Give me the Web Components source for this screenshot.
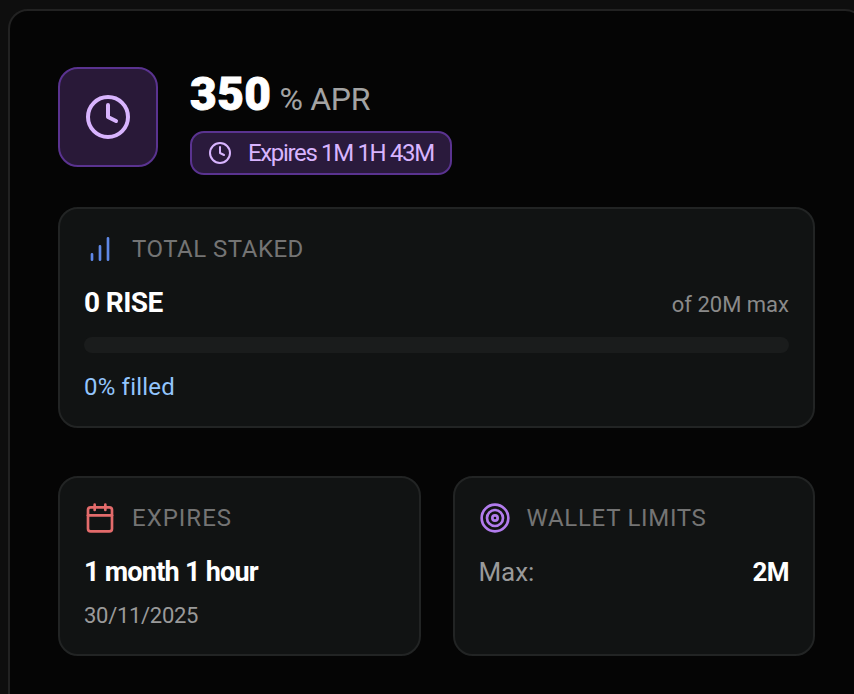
<!DOCTYPE html>
<html>
<head>
<meta charset="utf-8">
<title>Stake pool</title>
<style>
  html, body { margin: 0; height: 100%; overflow: hidden; background: #0e0e0e; }
  body { padding: 9px 0 0 8px; box-sizing: border-box; font-family: Roboto, "Liberation Sans", sans-serif; }
</style>
</head>
<body>
<x-pool>
  <x-apr-header slot="header" value="350" unit="% APR" expires="Expires 1M 1H 43M"></x-apr-header>

  <x-card slot="total" icon="bars" color="#5f88e6" label="TOTAL STAKED" spacing=".5">
    <x-between>
      <x-text size="28" weight="700" color="#fff" spacing="-.6">0 RISE</x-text>
      <x-text slot="end" size="22" color="#8a8a8a">of 20M max</x-text>
    </x-between>
    <x-progress value="0"></x-progress>
    <x-text size="24" color="#93c5fd" spacing=".2">0% filled</x-text>
  </x-card>

  <x-card slot="expires" icon="calendar" color="#e36b6b" label="EXPIRES" spacing="1">
    <x-text size="27" weight="700" color="#fff" spacing="-.75">1 month 1 hour</x-text>
    <x-text class="sub" size="22" color="#9a9a9a" spacing="-.3">30/11/2025</x-text>
  </x-card>

  <x-card slot="limits" icon="target" color="#b27ced" label="WALLET LIMITS" spacing=".7">
    <x-between>
      <x-text size="26" color="#9a9a9a" spacing="-.1">Max:</x-text>
      <x-text slot="end" size="26" weight="700" color="#fff" spacing="-.6">2M</x-text>
    </x-between>
  </x-card>
</x-pool>

<script>
const ICONS = {
  clock: '<circle cx="12" cy="12" r="10"/><path d="M12 6v6l4 2"/>',
  bars: '<path d="M12 20V10M18 20V4M6 20v-4"/>',
  calendar: '<path d="M8 2v4M16 2v4"/><rect x="3" y="4" width="18" height="18" rx="2"/><path d="M3 10h18"/>',
  target: '<circle cx="12" cy="12" r="10"/><circle cx="12" cy="12" r="6"/><circle cx="12" cy="12" r="2"/>'
}

class Icon extends HTMLElement {
  connectedCallback(){
    const size = this.getAttribute('size') || 32
    this.attachShadow({ mode: 'open' }).innerHTML = `
      <style>
        :host { display: block; width: ${size}px; height: ${size}px; flex: none; }
        svg { display: block; }
      </style>
      <svg width="${size}" height="${size}" viewBox="0 0 24 24" fill="none" stroke="${this.getAttribute('color')}"
        stroke-width="${this.getAttribute('stroke') || 2}" stroke-linecap="round" stroke-linejoin="round">${ICONS[this.getAttribute('name')]}</svg>
    `
  }
}

class Text extends HTMLElement {
  connectedCallback(){
    const a = n => this.getAttribute(n)
    this.attachShadow({ mode: 'open' }).innerHTML = `
      <style>
        :host {
          display: block;
          font-size: ${a('size')}px;
          font-weight: ${a('weight') || 400};
          color: ${a('color')};
          letter-spacing: ${a('spacing') || 0}px;
          line-height: 32px;
          white-space: nowrap;
        }
      </style>
      <slot></slot>
    `
  }
}

class Between extends HTMLElement {
  constructor(){
    super()
    this.attachShadow({ mode: 'open' }).innerHTML = `
      <style>
        :host { display: flex; justify-content: space-between; align-items: baseline; }
      </style>
      <slot></slot><slot name="end"></slot>
    `
  }
}

class Progress extends HTMLElement {
  connectedCallback(){
    this.attachShadow({ mode: 'open' }).innerHTML = `
      <style>
        :host { display: block; height: 16px; margin: 16px 0 18px; border-radius: 8px; background: #1a1c1c; overflow: hidden; }
        div { height: 100%; background: #93c5fd; }
      </style>
      <div style="width:${this.getAttribute('value')}%"></div>
    `
  }
}

class Card extends HTMLElement {
  connectedCallback(){
    this.attachShadow({ mode: 'open' }).innerHTML = `
      <style>
        :host {
          display: block;
          box-sizing: border-box;
          padding: 24px;
          background: #111313;
          border: 2px solid #222424;
          border-radius: 20px;
        }
        header { display: flex; align-items: center; gap: 16px; height: 32px; margin-bottom: 22px; }
        h3 { margin: 0; font-size: 24px; font-weight: 400; letter-spacing: ${this.getAttribute('spacing')}px; color: #747474; line-height: 32px; }
        ::slotted(.sub) { margin-top: 12px; }
      </style>
      <header>
        <x-icon name="${this.getAttribute('icon')}" color="${this.getAttribute('color')}"></x-icon>
        <h3>${this.getAttribute('label')}</h3>
      </header>
      <slot></slot>
    `
  }
}

class AprHeader extends HTMLElement {
  connectedCallback(){
    const purple = '#d8b4fe'
    this.attachShadow({ mode: 'open' }).innerHTML = `
      <style>
        :host { display: flex; align-items: flex-start; gap: 32px; }
        .tile {
          box-sizing: border-box;
          display: flex; align-items: center; justify-content: center;
          width: 100px; height: 100px;
          background: #291938;
          border: 2px solid #5a3390;
          border-radius: 20px;
        }
        .apr { display: flex; align-items: baseline; gap: 8px; height: 64px; line-height: 54px; }
        .num { font-size: 46px; font-weight: 900; color: #fff; -webkit-text-stroke: .9px #fff; letter-spacing: .5px; }
        .unit { font-size: 32px; color: #a3a3a3; letter-spacing: -.3px; }
        .chip {
          display: inline-flex; align-items: center; gap: 16px;
          box-sizing: border-box; height: 44px; padding: 0 16px;
          background: #2a1a3c;
          border: 2px solid #5a3390;
          border-radius: 14px;
          font-size: 24px; color: ${purple}; letter-spacing: -1.35px;
          white-space: nowrap;
        }
      </style>
      <div class="tile"><x-icon name="clock" size="48" color="${purple}"></x-icon></div>
      <div>
        <div class="apr"><span class="num">${this.getAttribute('value')}</span><span class="unit">${this.getAttribute('unit')}</span></div>
        <div class="chip"><x-icon name="clock" size="24" color="${purple}"></x-icon>${this.getAttribute('expires')}</div>
      </div>
    `
  }
}

class Pool extends HTMLElement {
  constructor(){
    super()
    this.attachShadow({ mode: 'open' }).innerHTML = `
      <style>
        :host {
          display: block;
          box-sizing: border-box;
          width: 857px;
          height: 760px;
          padding: 56px 48px 48px;
          background: #050505;
          border: 2px solid #222;
          border-radius: 20px;
        }
        .top { margin-bottom: 32px; }
        .total { margin-bottom: 48px; }
        .grid { display: grid; grid-template-columns: 1fr 1fr; gap: 32px; }
        ::slotted([slot="total"]) { height: 221px; }
        ::slotted([slot="expires"]), ::slotted([slot="limits"]) { height: 180px; }
      </style>
      <div class="top"><slot name="header"></slot></div>
      <div class="total"><slot name="total"></slot></div>
      <div class="grid"><slot name="expires"></slot><slot name="limits"></slot></div>
    `
  }
}

customElements.define('x-icon', Icon)
customElements.define('x-text', Text)
customElements.define('x-between', Between)
customElements.define('x-progress', Progress)
customElements.define('x-card', Card)
customElements.define('x-apr-header', AprHeader)
customElements.define('x-pool', Pool)
</script>
</body>
</html>
